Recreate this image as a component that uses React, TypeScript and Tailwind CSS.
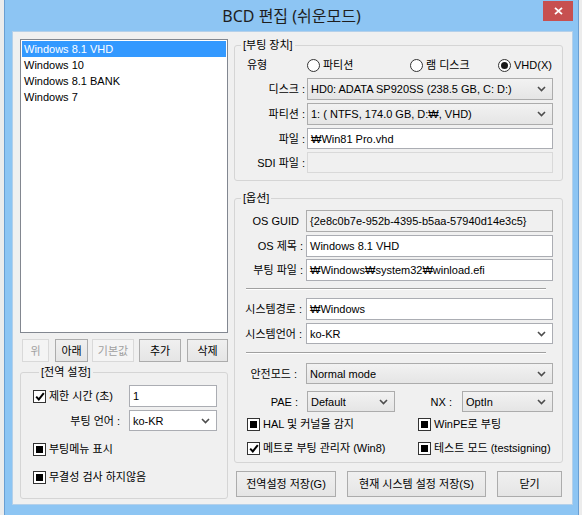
import React from "react";

type CheckState = "on" | "mixed";

function Chevron() {
  return (
    <svg width="9" height="6" viewBox="0 0 9 6" className="shrink-0">
      <path d="M1 1l3.5 3.5L8 1" fill="none" stroke="#4d4d4d" strokeWidth="1.6" />
    </svg>
  );
}

function Combo({ value, white, className }: { value: string; white?: boolean; className: string }) {
  return (
    <div
      className={`flex items-center justify-between border pl-[3px] pr-[6px] ${
        white ? "border-[#abadb3] bg-white" : "border-[#acacac] bg-gradient-to-b from-[#f2f2f2] to-[#e5e5e5]"
      } ${className}`}
    >
      <span className="truncate">{value}</span>
      <Chevron />
    </div>
  );
}

function TextBox({ value, className, tone = "white" }: { value?: string; className: string; tone?: "white" | "ro" | "off" }) {
  const look =
    tone === "white"
      ? "border-[#abadb3] bg-white"
      : tone === "ro"
      ? "border-[#acacac] bg-[#f0f0f0]"
      : "border-[#d9d9d9] bg-[#f0f0f0]";
  return <div className={`flex items-center border pl-[3px] ${look} ${className}`}>{value}</div>;
}

function Check({ state, label, className = "" }: { state: CheckState; label: string; className?: string }) {
  return (
    <div className={`flex h-[16px] items-center ${className}`}>
      <div className="flex h-[13px] w-[13px] shrink-0 items-center justify-center border border-[#333] bg-white">
        {state === "mixed" ? (
          <div className="h-[7px] w-[7px] bg-black" />
        ) : (
          <svg width="10" height="9" viewBox="0 0 10 9">
            <path d="M1.2 4.6l2.6 2.8L8.8 1.2" fill="none" stroke="#000" strokeWidth="2" />
          </svg>
        )}
      </div>
      <span className="ml-[3px] whitespace-nowrap">{label}</span>
    </div>
  );
}

function Radio({ on, label, className = "" }: { on?: boolean; label: string; className?: string }) {
  return (
    <div className={`flex items-center ${className}`}>
      <div className="flex h-[13px] w-[13px] shrink-0 items-center justify-center rounded-full border border-[#333] bg-white">
        {on && <div className="h-[7px] w-[7px] rounded-full bg-[#1a1a1a]" />}
      </div>
      <span className="ml-[3px] whitespace-nowrap">{label}</span>
    </div>
  );
}

function Btn({ label, off, className }: { label: string; off?: boolean; className: string }) {
  return (
    <div
      className={`flex items-center justify-center border ${
        off
          ? "border-[#d9d9d9] bg-[#f4f4f4] text-[#a0a0a0]"
          : "border-[#acacac] bg-gradient-to-b from-[#f0f0f0] to-[#e5e5e5]"
      } ${className}`}
    >
      {label}
    </div>
  );
}

function Rule() {
  return <div className="ml-[11px] mr-[16px] h-[2px] border-t border-b border-t-[#a0a0a0] border-b-white" />;
}

const items = ["Windows 8.1 VHD", "Windows 10", "Windows 8.1 BANK", "Windows 7"];

export default function App() {
  return (
    <div className="flex h-[515px] w-[582px] overflow-hidden bg-[#ececec] font-['Liberation_Sans','Noto_Sans_CJK_KR',sans-serif] text-[11px] leading-[14px] text-black">
      <div className="relative ml-[4px] flex h-[515px] w-[575px] flex-col border-x border-[#6a9fd2] bg-[#8dc5f3]">
        {/* title bar */}
        <div className="flex h-[31px] items-center justify-center">
          <span className="font-['Noto_Sans','Noto_Sans_CJK_KR',sans-serif] text-[16px] text-[#1e1e1e]">BCD 편집 (쉬운모드)</span>
        </div>
        <div className="absolute right-[5px] top-[1px] flex h-[20px] w-[30px] items-center justify-center bg-[#c75050]">
          <svg width="9" height="8" viewBox="0 0 9 8">
            <path d="M1 0.8l7 6.4M8 0.8l-7 6.4" stroke="#fff" strokeWidth="1.8" />
          </svg>
        </div>

        {/* client area */}
        <div className="ml-[7px] flex h-[474px] w-[561px] border border-[#b4d0ea] bg-[#f0f0f0] pl-[7px]">
          {/* left column */}
          <div className="flex w-[208px] flex-col pt-[7px]">
            <div className="h-[294px] border border-[#828790] bg-white p-px">
              {items.map((it, i) => (
                <div
                  key={it}
                  className={`flex h-[16px] items-center pl-[2px] ${i === 0 ? "bg-[#3399ff] text-white" : ""}`}
                >
                  {it}
                </div>
              ))}
            </div>
            <div className="mt-[6px] flex h-[23px]">
              <Btn label="위" off className="ml-[2px] w-[27px]" />
              <Btn label="아래" className="ml-[6px] w-[33px]" />
              <Btn label="기본값" off className="ml-[4px] w-[42px]" />
              <Btn label="추가" className="ml-[5px] w-[42px]" />
              <Btn label="삭제" className="ml-[6px] w-[41px]" />
            </div>
            <fieldset className="mt-[3px] rounded-[3px] border border-[#d5d5d5] pb-[13px] pl-[12px]">
              <legend className="ml-[6px] px-[2px] leading-[14px]">[전역 설정]</legend>
              <div className="mt-[6px] flex h-[22px] items-center">
                <Check state="on" label="제한 시간 (초)" className="w-[96px]" />
                <TextBox value="1" className="h-[22px] w-[88px]" />
              </div>
              <div className="mt-[3px] flex h-[21px] items-center">
                <span className="w-[96px] pr-[9px] text-right">부팅 언어 :</span>
                <Combo value="ko-KR" white className="h-[21px] w-[88px]" />
              </div>
              <Check state="mixed" label="부팅메뉴 표시" className="mt-[10px]" />
              <Check state="mixed" label="무결성 검사 하지않음" className="mt-[12px]" />
            </fieldset>
          </div>

          {/* right column */}
          <div className="ml-[6px] flex w-[329px] flex-col pt-[6px]">
            <fieldset className="rounded-[3px] border border-[#d5d5d5] pb-[7px]">
              <legend className="ml-[6px] px-[2px] leading-[14px]">[부팅 장치]</legend>
              <div className="mt-[5px] flex h-[16px] items-center pl-[12px]">
                <span className="w-[60px]">유형</span>
                <Radio label="파티션" className="w-[103px]" />
                <Radio label="램 디스크" className="w-[88px]" />
                <Radio on label="VHD(X)" />
              </div>
              <div className="mt-[5px] flex items-center">
                <span className="w-[72px] pr-[2px] text-right">디스크 :</span>
                <Combo value="HD0: ADATA SP920SS (238.5 GB, C: D:)" className="h-[22px] w-[246px]" />
              </div>
              <div className="mt-[3px] flex items-center">
                <span className="w-[72px] pr-[2px] text-right">파티션 :</span>
                <Combo value="1: ( NTFS, 174.0 GB, D:₩, VHD)" className="h-[22px] w-[246px]" />
              </div>
              <div className="mt-[3px] flex items-center">
                <span className="w-[72px] pr-[2px] text-right">파일 :</span>
                <TextBox value="₩Win81 Pro.vhd" className="h-[21px] w-[246px]" />
              </div>
              <div className="mt-[3px] flex items-center">
                <span className="w-[72px] pr-[2px] text-right">SDI 파일 :</span>
                <TextBox tone="off" className="h-[21px] w-[246px]" />
              </div>
            </fieldset>

            <fieldset className="mt-[10px] rounded-[3px] border border-[#d5d5d5] pb-[6px]">
              <legend className="ml-[6px] px-[2px] leading-[14px]">[옵션]</legend>
              <div className="mt-[5px] flex items-center">
                <span className="w-[71px] pr-[7px] text-right">OS GUID</span>
                <TextBox tone="ro" value="{2e8c0b7e-952b-4395-b5aa-57940d14e3c5}" className="h-[22px] w-[247px]" />
              </div>
              <div className="mt-[3px] flex items-center">
                <span className="w-[71px] pr-[3px] text-right">OS 제목 :</span>
                <TextBox value="Windows 8.1 VHD" className="h-[22px] w-[247px]" />
              </div>
              <div className="mt-[2px] flex items-center">
                <span className="w-[71px] pr-[3px] text-right">부팅 파일 :</span>
                <TextBox value="₩Windows₩system32₩winload.efi" className="h-[22px] w-[247px]" />
              </div>
              <div className="mt-[7px]">
                <Rule />
              </div>
              <div className="mt-[8px] flex items-center">
                <span className="w-[71px] pr-[4px] text-right">시스템경로 :</span>
                <TextBox value="₩Windows" className="h-[22px] w-[247px]" />
              </div>
              <div className="mt-[3px] flex items-center">
                <span className="w-[71px] pr-[4px] text-right">시스템언어 :</span>
                <Combo value="ko-KR" white className="h-[21px] w-[247px]" />
              </div>
              <div className="mt-[8px]">
                <Rule />
              </div>
              <div className="mt-[9px] flex items-center">
                <span className="w-[71px] pr-[9px] text-right">안전모드 :</span>
                <Combo value="Normal mode" className="h-[21px] w-[247px]" />
              </div>
              <div className="mt-[7px] flex items-center">
                <span className="w-[72px] pr-[9px] text-right">PAE :</span>
                <Combo value="Default" className="h-[21px] w-[88px]" />
                <span className="w-[67px] pr-[10px] text-right">NX :</span>
                <Combo value="OptIn" className="h-[21px] w-[91px]" />
              </div>
              <div className="mt-[4px] flex pl-[12px]">
                <Check state="mixed" label="HAL 및 커널을 감지" className="w-[171px]" />
                <Check state="mixed" label="WinPE로 부팅" />
              </div>
              <div className="mt-[8px] flex pl-[12px]">
                <Check state="on" label="메트로 부팅 관리자 (Win8)" className="w-[171px]" />
                <Check state="mixed" label="테스트 모드 (testsigning)" />
              </div>
            </fieldset>

            <div className="mt-[8px] flex h-[26px]">
              <Btn label="전역설정 저장(G)" className="ml-[2px] w-[100px]" />
              <Btn label="현재 시스템 설정 저장(S)" className="ml-[11px] w-[139px]" />
              <Btn label="닫기" className="ml-[11px] w-[65px]" />
            </div>
          </div>
        </div>
      </div>
    </div>
  );
}
